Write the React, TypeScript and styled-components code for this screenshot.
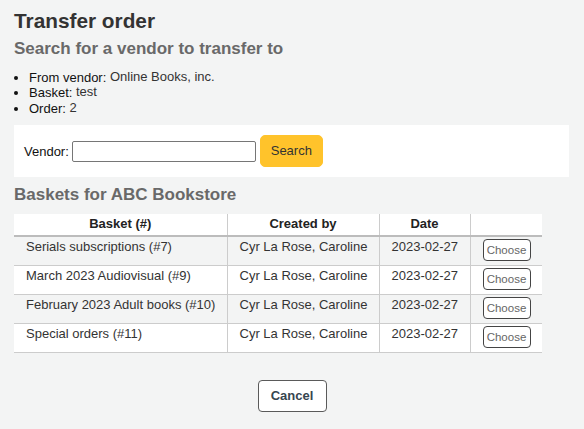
import React from "react";
import styled, { createGlobalStyle } from "styled-components";

const GlobalStyle = createGlobalStyle`
  html, body {
    margin: 0;
    padding: 0;
    background: #f3f4f4;
  }
  body {
    font-family: "Liberation Sans", Arial, sans-serif;
    font-size: 13px;
    color: #333;
  }
`;

const Page = styled.main`
  padding: 8px 14px 20px 14px;
  display: flex;
  flex-direction: column;
`;

const Title = styled.h1`
  margin: 0;
  font-size: 20.8px;
  line-height: 25px;
  font-weight: bold;
  color: #333;
`;

const SubTitle = styled.h2`
  margin: 6px 0 0 0;
  font-size: 17px;
  line-height: 20.4px;
  font-weight: bold;
  color: #696969;
`;

const SectionTitle = styled.h3`
  margin: 8px 0 0 0;
  font-size: 17px;
  line-height: 20.4px;
  font-weight: bold;
  color: #696969;
`;

const InfoList = styled.ul`
  margin: 10.5px 0 0 0;
  padding-left: 15px;
  font-size: 13px;
  line-height: 15.5px;
  color: #111;
`;

const InfoItem = styled.li``;

const Label = styled.span`
  color: #111;
`;

const Value = styled.span`
  position: relative;
  top: -1px;
  color: #333;
`;

const SearchBox = styled.form`
  margin-top: 8.5px;
  background: #fff;
  height: 52px;
  padding: 0 10px;
  display: flex;
  align-items: center;
  width: 555px;
  box-sizing: border-box;
`;

const FieldLabel = styled.label`
  font-size: 13px;
  color: #111;
  margin-right: 3px;
  margin-top: 1px;
`;

const TextInput = styled.input`
  width: 184px;
  height: 21px;
  box-sizing: border-box;
  border: 1px solid #767676;
  border-radius: 2px;
  background: #fff;
  padding: 1px 2px;
  font-family: inherit;
  font-size: 13px;
  margin-top: 1px;
`;

const PrimaryButton = styled.button`
  margin-left: 4px;
  width: 63px;
  height: 32px;
  background: #ffc32b;
  border: 1px solid #ffc32b;
  border-radius: 5px;
  color: #333;
  font-family: inherit;
  font-size: 13px;
  padding: 0;
`;

const Table = styled.table`
  margin-top: 8.6px;
  width: 528px;
  table-layout: fixed;
  border-collapse: collapse;
  font-size: 13px;
  line-height: 15.5px;
`;

const Col = styled.col<{ $w: number }>`
  width: ${(p) => p.$w}px;
`;

const HeadCell = styled.th`
  background: #fff;
  font-weight: bold;
  color: #222;
  text-align: center;
  padding: 2px 12px 3.5px;
  border-left: 1px solid #ccc;
  border-bottom: 2px solid #bcbcbc;
  &:first-child {
    border-left: none;
  }
`;

const Row = styled.tr<{ $odd: boolean }>`
  background: ${(p) => (p.$odd ? "#f3f4f4" : "#fff")};
`;

const Cell = styled.td`
  vertical-align: top;
  text-align: left;
  padding: 2px 12px 4px;
  color: #333;
  border-left: 1px solid #ccc;
  border-bottom: 1px solid #ccc;
  white-space: nowrap;
  &:first-child {
    border-left: none;
  }
`;

const SmallButton = styled.button`
  display: block;
  width: 48px;
  height: 22px;
  box-sizing: border-box;
  background: #fff;
  border: 1px solid #444;
  border-radius: 4px;
  color: #666;
  font-family: inherit;
  font-size: 11.5px;
  padding: 0;
`;

const Actions = styled.div`
  margin-top: 27px;
  display: flex;
  justify-content: center;
`;

const CancelButton = styled.button`
  width: 69px;
  height: 32px;
  box-sizing: border-box;
  background: #fff;
  border: 1px solid #5a5a5a;
  border-radius: 4px;
  color: #36454f;
  font-family: inherit;
  font-weight: bold;
  font-size: 13px;
  padding: 0;
`;

const baskets = [
  { name: "Serials subscriptions (#7)", by: "Cyr La Rose, Caroline", date: "2023-02-27" },
  { name: "March 2023 Audiovisual (#9)", by: "Cyr La Rose, Caroline", date: "2023-02-27" },
  { name: "February 2023 Adult books (#10)", by: "Cyr La Rose, Caroline", date: "2023-02-27" },
  { name: "Special orders (#11)", by: "Cyr La Rose, Caroline", date: "2023-02-27" },
];

export default function App() {
  return (
    <>
      <GlobalStyle />
      <Page>
        <Title>Transfer order</Title>
        <SubTitle>Search for a vendor to transfer to</SubTitle>
        <InfoList>
          <InfoItem>
            <Label>From vendor: </Label>
            <Value>Online Books, inc.</Value>
          </InfoItem>
          <InfoItem>
            <Label>Basket: </Label>
            <Value>test</Value>
          </InfoItem>
          <InfoItem>
            <Label>Order: </Label>
            <Value>2</Value>
          </InfoItem>
        </InfoList>
        <SearchBox onSubmit={(e) => e.preventDefault()}>
          <FieldLabel htmlFor="vendor">Vendor:</FieldLabel>
          <TextInput id="vendor" type="text" />
          <PrimaryButton type="submit">Search</PrimaryButton>
        </SearchBox>
        <SectionTitle>Baskets for ABC Bookstore</SectionTitle>
        <Table>
          <colgroup>
            <Col $w={213} />
            <Col $w={152} />
            <Col $w={91} />
            <Col $w={72} />
          </colgroup>
          <thead>
            <tr>
              <HeadCell>Basket (#)</HeadCell>
              <HeadCell>Created by</HeadCell>
              <HeadCell>Date</HeadCell>
              <HeadCell></HeadCell>
            </tr>
          </thead>
          <tbody>
            {baskets.map((b, i) => (
              <Row key={b.name} $odd={i % 2 === 0}>
                <Cell>{b.name}</Cell>
                <Cell>{b.by}</Cell>
                <Cell>{b.date}</Cell>
                <Cell>
                  <SmallButton type="button">Choose</SmallButton>
                </Cell>
              </Row>
            ))}
          </tbody>
        </Table>
        <Actions>
          <CancelButton type="button">Cancel</CancelButton>
        </Actions>
      </Page>
    </>
  );
}
